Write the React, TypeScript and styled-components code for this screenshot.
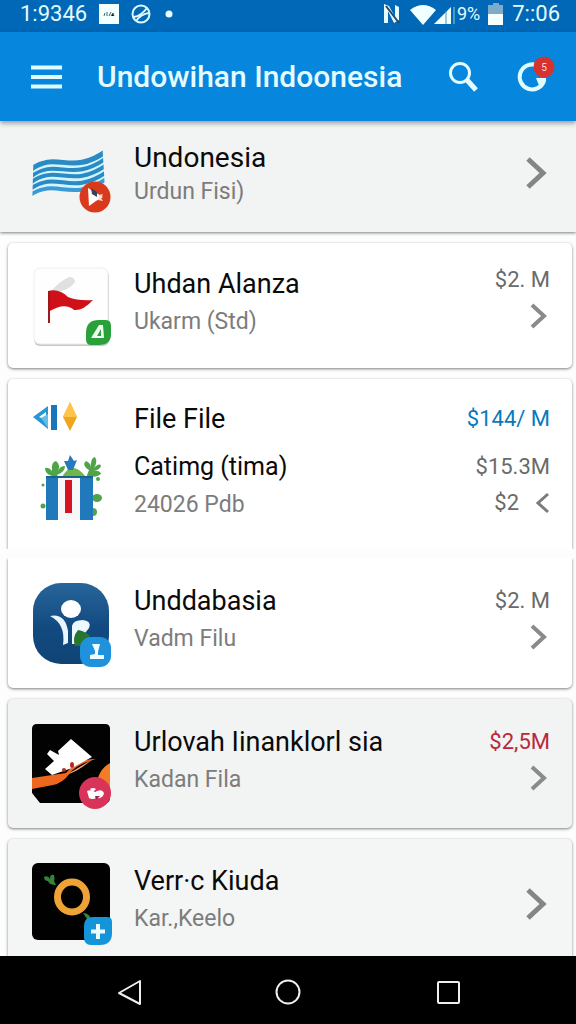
import React from "react";
import styled, { createGlobalStyle, css } from "styled-components";

const GlobalStyle = createGlobalStyle`
  * { box-sizing: border-box; }
  body { margin: 0; background: #fdfdfd; font-family: Roboto, "Liberation Sans", sans-serif; }
  button { border: 0; padding: 0; background: none; font: inherit; color: inherit; cursor: pointer; }
  svg { display: block; }
`;

const Screen = styled.div`
  min-height: 100vh;
  display: flex;
  flex-direction: column;
`;

const StatusBar = styled.div`
  display: flex;
  justify-content: space-between;
  height: 32px;
  padding: 0 16px 4px 20px;
  background: #0168b7;
  color: #e4fbff;
  font-size: 22px;
  line-height: 28px;
`;

const StatusGroup = styled.div<{ $gap: number }>`
  display: flex;
  align-items: center;
  gap: ${(p) => p.$gap}px;
`;

const Signal = styled.div`
  display: flex;
  align-items: center;
  gap: 2px;
  font-size: 18px;
`;

const AppBar = styled.header`
  position: sticky;
  top: 0;
  z-index: 1;
  display: flex;
  align-items: center;
  height: 89px;
  padding: 0 20px 0 30px;
  background: #0686dc;
  color: #e4fbff;
  box-shadow: 0 2px 5px rgba(0, 0, 0, 0.4);
`;

const AppTitle = styled.h1`
  flex: 1;
  margin: 0 0 0 35px;
  font-size: 30px;
  line-height: 40px;
  font-weight: 500;
  white-space: nowrap;
`;

const BarButton = styled.button`
  margin-left: 32px;
`;

const List = styled.main`
  flex: 1;
  display: flex;
  flex-direction: column;
  gap: 11px;
`;

type Part = "banner" | "card" | "upper" | "lower" | "last";

const Item = styled.a<{ $part: Part; $tint?: boolean; $top: number; $height: number }>`
  display: flex;
  min-height: ${(p) => p.$height}px;
  margin: 0 4px 0 8px;
  padding: ${(p) => p.$top}px 22px 0 24px;
  border-radius: 5px;
  background: ${(p) => (p.$tint ? "#f2f3f3" : "#ffffff")};
  box-shadow: 0 1px 3px rgba(0, 0, 0, 0.5);
  color: #0a0a0a;
  text-decoration: none;
  ${(p) => p.$part === "banner" && css`
    margin: 0;
    padding-left: 32px;
    padding-right: 26px;
    border-radius: 0;
  `}
  ${(p) => p.$part === "upper" && css`
    border-radius: 5px 5px 0 0;
    clip-path: inset(-4px -4px 0 -4px);
  `}
  ${(p) => p.$part === "lower" && css`
    margin-top: -2px;
    border-radius: 0 0 5px 5px;
    clip-path: inset(0 -4px -6px -4px);
  `}
  ${(p) => p.$part === "last" && css`
    flex: 1;
    border-radius: 5px 5px 0 0;
    background: #f4f5f5;
  `}
`;

const IconSlot = styled.div`
  flex: none;
  width: 102px;
`;

const Texts = styled.div<{ $gap: number }>`
  flex: 1;
  display: flex;
  flex-direction: column;
  gap: ${(p) => p.$gap}px;
  white-space: nowrap;
`;

const Title = styled.span<{ $size?: number }>`
  font-size: ${(p) => p.$size ?? 27}px;
  line-height: 36px;
`;

const Subtitle = styled.span`
  font-size: 23px;
  line-height: 32px;
  color: #7c7c7c;
`;

const Side = styled.div<{ $gap: number; $top?: number }>`
  display: flex;
  flex-direction: column;
  align-items: flex-end;
  gap: ${(p) => p.$gap}px;
  padding-top: ${(p) => p.$top ?? 0}px;
`;

const Amount = styled.span<{ $color?: string }>`
  display: flex;
  align-items: center;
  gap: 15px;
  font-size: 22px;
  line-height: 28px;
  color: ${(p) => p.$color ?? "#6a6a6a"};
`;

const NavBar = styled.nav`
  position: sticky;
  bottom: 0;
  z-index: 1;
  display: flex;
  justify-content: center;
  align-items: center;
  gap: 132px;
  height: 68px;
  padding-top: 4px;
  background: #000;
`;

const Chevron = ({ large, left }: { large?: boolean; left?: boolean }) =>
  large ? (
    <svg width="24" height="34" viewBox="0 0 24 34" fill="none" stroke="#858585" strokeWidth="5">
      <path d="M2 3l15 14L2 31" />
    </svg>
  ) : left ? (
    <svg width="16" height="24" viewBox="0 0 16 24" fill="none" stroke="#7c7c7c" strokeWidth="3">
      <path d="M14 3L4 12l10 9" />
    </svg>
  ) : (
    <svg width="20" height="28" viewBox="0 0 20 28" fill="none" stroke="#8a8a8a" strokeWidth="4">
      <path d="M2 3l12 11L2 25" />
    </svg>
  );

const WavesIcon = () => (
  <svg width="84" height="86" viewBox="0 0 84 86">
    <defs>
      <clipPath id="waveClip"><path d="M2 0H70L73 50V70H0Z" /></clipPath>
    </defs>
    <g clipPath="url(#waveClip)" fill="none">
      <path d="M-2 42C26 21 38 50 76 22" stroke="#d3f4fd" strokeWidth="26" />
      <g stroke="#2a8bc4" strokeWidth="4">
        <path d="M-2 30C26 9 38 38 76 10" strokeWidth="5" />
        <path d="M-2 37C26 16 38 45 76 17" />
        <path d="M-2 43C26 22 38 51 76 24" />
        <path d="M-2 49C26 29 38 58 76 31" />
        <path d="M-2 55C26 37 38 64 76 38" stroke="#3a9ad6" />
      </g>
    </g>
    <circle cx="63" cy="57" r="15.5" fill="#d93a1b" />
    <path d="M56 48l15 9-7 4-7 5z" fill="#fff" />
    <path d="M59 48l6 4v5l-5-3z" fill="#394058" />
    <path d="M67 55l4-1-2 4 2 3-5-1z" fill="#f7dcd5" />
  </svg>
);

const FlagIcon = () => (
  <svg width="84" height="86" viewBox="0 0 84 86">
    <rect x="2" y="4" width="75" height="76" rx="6" fill="#c6c8c8" />
    <rect x="2" y="2" width="74" height="76" rx="6" fill="#fefefe" stroke="#eeeeee" />
    <path d="M18 26Q28 15 37 11Q43 11 43 16Q37 25 23 26Z" fill="#dfe1e1" />
    <path d="M16 25Q27 22 36 31Q46 35 61 34Q51 45 42 44Q33 36 18 45L17 57Z" fill="#cf1018" />
    <path d="M17 25v32" stroke="#9d171b" strokeWidth="2" />
    <path d="M67 54h7q5 0 5 6v8q0 11-12 11h-8q-5 0-5-6v-6q0-13 13-13z" fill="#29a13b" />
    <path fillRule="evenodd" d="M59 72l8-13 4 0 1 13zM65 70l4-7v7z" fill="#edfff1" />
  </svg>
);

const GiftIcon = () => (
  <svg width="84" height="124" viewBox="0 0 84 124">
    <path fillRule="evenodd" d="M1 16l15-11v23zM7 16l7-5v8z" fill="#2796d4" />
    <path d="M9 17l7-4v14z" fill="#67bce8" />
    <path d="M19 4h6v25h-6z" fill="#1877ba" />
    <path d="M38 1l7 15-7 14-7-14z" fill="#f0a51f" />
    <path d="M38 1l7 15H31z" fill="#ffc54a" />
    <g fill="#4fa447">
      <path d="M20 75q-7-2-7-8 4-1 7 3-1-9 4-10 5 4 2 10 2-5 7-5 0 6-8 9l2 3z" />
      <path d="M54 77l3-8q-8-5-3-9 5 2 5 7-1-10 4-11 3 5-1 11 4-5 7-3 0 5-8 6 7-1 8 3-5 4-10 2z" />
      <path d="M30 76Q35 67 41 67T54 76Z" fill="#70b64a" />
      <circle cx="11" cy="84" r="1.500" /><circle cx="66" cy="78" r="2" />
      <circle cx="11" cy="105" r="2.500" /><ellipse cx="65" cy="97" rx="5" ry="4" /><circle cx="61" cy="111" r="4" />
    </g>
    <path d="M38 54l4 6 3-1-4 10h-5l-4-9h4z" fill="#267abd" />
    <path d="M14 75h47v44H14z" fill="#2079ba" />
    <path d="M26 77h22v42H26z" fill="#f7f7f8" />
    <path d="M33 79h7v33h-7z" fill="#d51423" />
    <path d="M14 76h47" stroke="#196393" strokeWidth="2" />
  </svg>
);

const PersonIcon = () => (
  <svg width="84" height="86" viewBox="0 0 84 86">
    <defs>
      <linearGradient id="navy" x2="0" y2="1"><stop stopColor="#27659b" /><stop offset=".55" stopColor="#124a80" /><stop offset="1" stopColor="#0f4374" /></linearGradient>
    </defs>
    <rect x="1" y="0" width="76" height="81" rx="28" fill="url(#navy)" />
    <ellipse cx="39" cy="26" rx="10" ry="9" fill="#fff" />
    <path d="M18 33Q33 30 36 48V60L31 62Q34 41 18 33Z" fill="#e9f6ff" />
    <path d="M40 61V43Q41 37 51 37q9 1 6 8l-7 9-4 7z" fill="#edf8ff" />
    <path d="M46 47q7 1 12 6l-4 10H43q-3-9 3-16z" fill="#26762d" />
    <rect x="48" y="54" width="31" height="30" rx="11" fill="#1e92dc" />
    <path d="M60 61h8l-2 8v3l6 0v4H58v-4l5-1v-3z" fill="#effcff" />
  </svg>
);

const HouseIcon = () => (
  <svg width="84" height="86" viewBox="0 0 84 86">
    <defs><clipPath id="houseClip"><path d="M5 0h68q5 0 5 5v69q0 5-5 5H8L0 69V5q0-5 5-5z" /></clipPath></defs>
    <g clipPath="url(#houseClip)">
      <path d="M0 0h80v82H0z" fill="#020203" />
      <path d="M0 54L34 49Q45 35 64 35Q45 40 38 49Q31 59 21 61L0 65Z" fill="#ed671f" />
      <path d="M78 39v26H64q1-19 14-26z" fill="#f47c24" />
      <path d="M36 50L61 35Q45 48 36 50Z" fill="#ffb28c" />
    </g>
    <path d="M39 15L60 33 40 44 20 51 13 45 22 37 15 30 18 26 27 31 26 27z" fill="#fff" />
    <ellipse cx="40" cy="41" rx="2" ry="3" fill="#bc2821" /><circle cx="32" cy="46" r="2" fill="#bc2821" />
    <circle cx="63" cy="69" r="16" fill="#d83358" />
    <path d="M55 67q4-2 8 1 7-4 9 1-1 6-7 5-5 2-8 0zM58 65q3-2 6 0l-3 3z" fill="#fff" />
    <path d="M63 72h5l-4 4z" fill="#972a50" />
  </svg>
);

const RingIcon = () => (
  <svg width="84" height="86" viewBox="0 0 84 86">
    <rect x="0" y="0" width="78" height="77" rx="6" fill="#010102" />
    <path d="M12 14q4-2 6 2 0-5 4-4 1 5 0 6l2 4q-7 0-8-4-4 0-4-4zM51 50q7 0 8 7l-4-1z" fill="#37833a" />
    <ellipse cx="40" cy="34" rx="14.5" ry="15" fill="none" stroke="#efa337" strokeWidth="7" />
    <path d="M61 54h14q5 0 5 5v11q0 12-12 12h-9q-7 0-7-8V63q0-9 9-9z" fill="#1495da" />
    <path d="M66 61v15M59 68.500h14" stroke="#e9fcff" strokeWidth="4" />
  </svg>
);

export default function App() {
  return (
    <Screen>
      <GlobalStyle />
      <StatusBar>
        <StatusGroup $gap={12}>
          <span>1:9346</span>
          <svg width="20" height="20" viewBox="0 0 20 20">
            <path d="M0 0h20v20H0z" fill="#f4ffff" />
            <path d="M5 12l1-3M8 12V8M10 12l2-4M12 12l2-3 1 3" stroke="#4c6269" strokeWidth="1" />
          </svg>
          <svg width="20" height="20" viewBox="0 0 20 20" fill="none" stroke="#dff9ff">
            <circle cx="10" cy="10" r="8.500" strokeWidth="2" />
            <path d="M3 13Q10 12 16 4M5 17q5-7 13-8" strokeWidth="2" />
          </svg>
          <svg width="12" height="8" viewBox="0 0 12 8"><circle cx="6" cy="4" r="3.500" fill="#e9fcff" /></svg>
        </StatusGroup>
        <StatusGroup $gap={8}>
          <svg width="18" height="22" viewBox="0 0 18 22">
            <path d="M1 1l5 2 6 11V2l4 2v13l-5 3L5 8v12H1z" fill="#e4fbff" />
            <path d="M3 3l13 17" stroke="#284563" strokeWidth="2" />
          </svg>
          <Signal>
            <svg width="46" height="22" viewBox="0 0 46 22" fill="#f0ffff">
              <path d="M1 7Q14-3 27 7L14 22z" />
              <path d="M25 21L42 4v17z" />
              <path d="M37 8v13" stroke="#528eac" />
              <path d="M45 4v17" stroke="#449fc3" strokeWidth="2" />
            </svg>
            <span>9%</span>
          </Signal>
          <svg width="16" height="22" viewBox="0 0 16 22">
            <path d="M5 0h6v2h4v9H0V2h5z" fill="#7eabc8" /><path d="M0 11h15v11H0z" fill="#f5ffff" />
          </svg>
          <span>7::06</span>
        </StatusGroup>
      </StatusBar>
      <AppBar>
        <button aria-label="Menu">
          <svg width="32" height="24" viewBox="0 0 32 24" stroke="#dffbff" strokeWidth="4"><path d="M1 2.500h31M1 12h31M1 21.500h31" /></svg>
        </button>
        <AppTitle>Undowihan Indoonesia</AppTitle>
        <BarButton aria-label="Search">
          <svg width="32" height="32" viewBox="0 0 32 32" fill="none" stroke="#e4fbff">
            <circle cx="12" cy="12" r="9.500" strokeWidth="3" /><path d="M19 19l9 10" strokeWidth="5" />
          </svg>
        </BarButton>
        <BarButton aria-label="Refresh, 5 updates">
          <svg width="44" height="48" viewBox="0 0 44 48">
            <path d="M24 12A12.500 12.500 0 1 0 32 28" fill="none" stroke="#dffbff" strokeWidth="4" />
            <path d="M24 25h10v3l-6 7z" fill="#dffbff" />
            <circle cx="32" cy="14" r="10.500" fill="#d53230" />
            <text x="32" y="18" textAnchor="middle" fontSize="10" fill="#ffd9d5">5</text>
          </svg>
        </BarButton>
      </AppBar>
      <List>
        <Item href="#undonesia" $part="banner" $tint $top={19} $height={111}>
          <IconSlot><WavesIcon /></IconSlot>
          <Texts $gap={0}><Title $size={28}>Undonesia</Title><Subtitle>Urdun Fisi)</Subtitle></Texts>
          <Side $gap={0} $top={16}><Chevron large /></Side>
        </Item>
        <Item href="#uhdan" $part="card" $top={23} $height={125}>
          <IconSlot><FlagIcon /></IconSlot>
          <Texts $gap={4}><Title>Uhdan Alanza</Title><Subtitle>Ukarm (Std)</Subtitle></Texts>
          <Side $gap={8}><Amount>$2. M</Amount><Chevron /></Side>
        </Item>
        <Item href="#file" $part="upper" $top={22} $height={170}>
          <IconSlot><GiftIcon /></IconSlot>
          <Texts $gap={12}>
            <Title>File File</Title>
            <Texts $gap={4}>
              <Title $size={25}>Catimg (tima)</Title>
              <Subtitle>24026 Pdb</Subtitle>
            </Texts>
          </Texts>
          <Side $gap={20} $top={4}>
            <Amount $color="#0879bd">$144/ M</Amount>
            <Side $gap={8}>
              <Amount>$15.3M</Amount>
              <Amount>$2 <Chevron left /></Amount>
            </Side>
          </Side>
        </Item>
        <Item href="#unddabasia" $part="lower" $top={25} $height={130}>
          <IconSlot><PersonIcon /></IconSlot>
          <Texts $gap={4}><Title>Unddabasia</Title><Subtitle>Vadm Filu</Subtitle></Texts>
          <Side $gap={8} $top={4}><Amount>$2. M</Amount><Chevron /></Side>
        </Item>
        <Item href="#urlovah" $part="card" $tint $top={25} $height={129}>
          <IconSlot><HouseIcon /></IconSlot>
          <Texts $gap={4}><Title>Urlovah Iinanklorl sia</Title><Subtitle>Kadan Fila</Subtitle></Texts>
          <Side $gap={8} $top={4}><Amount $color="#b9283b">$2,5M</Amount><Chevron /></Side>
        </Item>
        <Item href="#verrc" $part="last" $tint $top={24} $height={117}>
          <IconSlot><RingIcon /></IconSlot>
          <Texts $gap={4}><Title>Verr·c Kiuda</Title><Subtitle>Kar.,Keelo</Subtitle></Texts>
          <Side $gap={0} $top={24}><Chevron large /></Side>
        </Item>
      </List>
      <NavBar>
        <button aria-label="Back"><svg width="28" height="28" viewBox="0 0 28 28" fill="none" stroke="#eee" strokeWidth="2"><path d="M26 3v23L5 15z" strokeLinejoin="round" /></svg></button>
        <button aria-label="Home"><svg width="28" height="28" viewBox="0 0 28 28" fill="none" stroke="#eee" strokeWidth="2"><circle cx="14" cy="14" r="11.500" /></svg></button>
        <button aria-label="Recent apps"><svg width="28" height="28" viewBox="0 0 28 28" fill="none" stroke="#eee" strokeWidth="2"><rect x="4" y="4" width="21" height="21" rx="1" /></svg></button>
      </NavBar>
    </Screen>
  );
}
